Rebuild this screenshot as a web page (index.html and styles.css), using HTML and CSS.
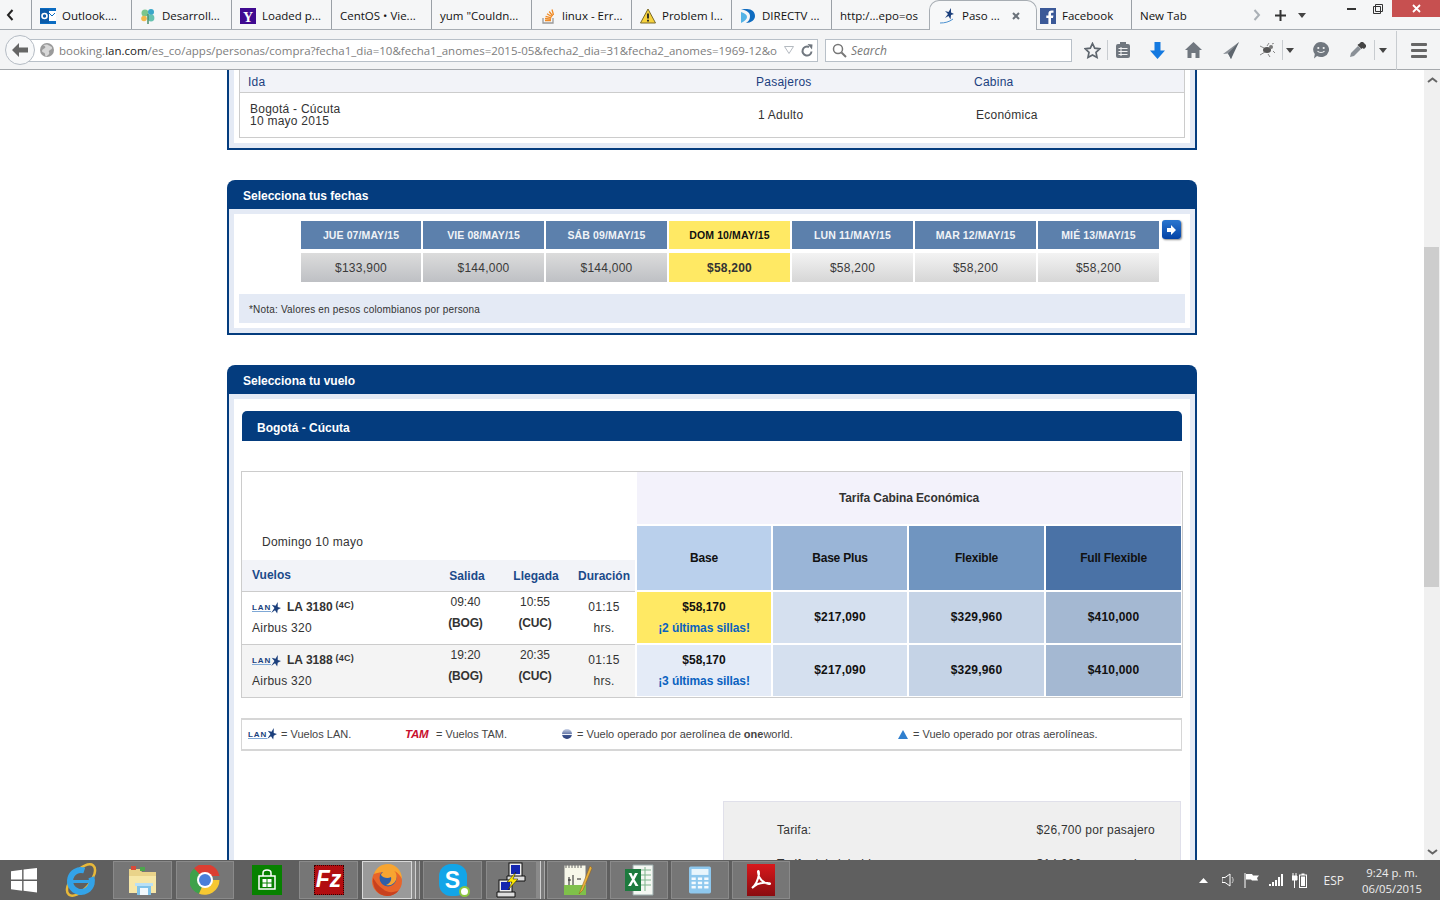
FILE: index.html
```html
<!DOCTYPE html>
<html lang="es">
<head>
<meta charset="utf-8">
<title>Paso 1</title>
<link rel="stylesheet" href="styles.css">
</head>
<body>
<header class="chrome">
  <div class="tabbar">
    <div class="tab-back"><svg width="8" height="12" viewBox="0 0 8 12"><path d="M6.500 1 2 6l4.500 5" fill="none" stroke="#222" stroke-width="2"/></svg></div>
    <div class="tab"><svg class="fav" viewBox="0 0 16 16"><rect width="16" height="16" fill="#0b6cc2"/><rect x="8" y="3" width="8" height="10" fill="#fff"/><path d="M9 5l3 3 3-3" fill="none" stroke="#0b6cc2"/><rect y="1" width="9" height="14" fill="#0a5aa8"/><circle cx="4.500" cy="8" r="2.500" fill="none" stroke="#fff" stroke-width="1.600"/></svg><span>Outlook....</span></div>
    <div class="tab"><svg class="fav" viewBox="0 0 16 16"><circle cx="5" cy="5" r="3.500" fill="#7cc68d"/><circle cx="11" cy="4" r="3" fill="#3aa6c9"/><circle cx="4" cy="10.500" r="2.800" fill="#f2b84b"/><circle cx="11" cy="10" r="3.400" fill="#66c2b0"/><path d="M8 16V6" stroke="#4b8f6a" stroke-width="1.500"/></svg><span>Desarroll...</span></div>
    <div class="tab"><svg class="fav" viewBox="0 0 16 16"><rect width="16" height="16" fill="#400a90"/><text x="8" y="13.500" text-anchor="middle" class="fav-y">Y</text></svg><span>Loaded p...</span></div>
    <div class="tab"><span>CentOS • Vie...</span></div>
    <div class="tab"><span>yum "Couldn...</span></div>
    <div class="tab"><svg class="fav" viewBox="0 0 16 16"><path d="M3 10v5h10v-5" fill="none" stroke="#999" stroke-width="1.300"/><path d="M5 12.500h6M5 10.500l6 .6M5.600 8.300l5.800 1.500M7 5.800l5 3M9.200 3.500l3.500 4.500M12 1.500l1.500 5.500" stroke="#f08a24" stroke-width="1.300" fill="none"/></svg><span>linux - Err...</span></div>
    <div class="tab"><svg class="fav" viewBox="0 0 16 16"><path d="M8 1 15.500 15H.5z" fill="#f7d23c" stroke="#7a6a2a"/><path d="M8 5.500v5M8 11.800v1.700" stroke="#222" stroke-width="1.800"/></svg><span>Problem I...</span></div>
    <div class="tab"><svg class="fav" viewBox="0 0 16 16"><path d="M1 1h6c5 0 8 3 8 7s-4 7-9 7c3-2 4-4 4-7S8 3 1 1z" fill="#0f6cc0"/><path d="M1 4c4 1 6 3 6 5s-2 4-6 6z" fill="#53b3e6"/></svg><span>DIRECTV ...</span></div>
    <div class="tab"><span>http:/...epo=os</span></div>
    <div class="tab tab-active"><svg class="fav" viewBox="0 0 16 16"><path d="M11 0 8.500 4 5 3l3 3-3 4 3.500-2 2 3.500L11 7l3-1-3-1.500z" fill="#1b3f7c"/><path d="M0 15c5 0 9-1 13-4" fill="none" stroke="#4a90d0"/></svg><span class="tab-label">Paso ...</span><svg class="tab-x" width="8" height="8" viewBox="0 0 8 8"><path d="M1 1l6 6M7 1 1 7" stroke="#6b727a" stroke-width="2"/></svg></div>
    <div class="tab tab-fb"><svg class="fav" viewBox="0 0 16 16"><rect width="16" height="16" fill="#3b5998"/><path d="M11 16v-6h2l.4-2.500H11V6c0-.8.3-1.300 1.300-1.300h1.200V2.500C13 2.400 12.300 2.400 11.600 2.400 9.700 2.400 8.400 3.500 8.400 5.600v1.900H6.300V10h2.100v6z" fill="#fff"/></svg><span>Facebook</span></div>
    <div class="tab tab-last"><span>New Tab</span></div>
    <div class="tab-tools">
      <svg class="tool-chev" width="8" height="12" viewBox="0 0 8 12"><path d="M1.500 1 6 6l-4.500 5" fill="none" stroke="#aab0b6" stroke-width="2"/></svg>
      <svg class="tool-plus" width="11" height="11" viewBox="0 0 11 11"><path d="M5.500 0v11M0 5.500h11" stroke="#333" stroke-width="2"/></svg>
      <svg class="tool-drop" width="8" height="5" viewBox="0 0 8 5"><path d="M0 0h8L4 5z" fill="#444"/></svg>
    </div>
    <div class="winctl">
      <span class="win-min"></span>
      <svg class="win-max" width="10" height="10" viewBox="0 0 10 10"><path d="M2.500.5h7v7h-7zM.5 2.500h7v7h-7z" fill="#f5f6f7" stroke="#333"/></svg>
      <div class="win-close"><svg width="9" height="9" viewBox="0 0 9 9"><path d="M1 1l7 7M8 1 1 8" stroke="#fff" stroke-width="1.800"/></svg></div>
    </div>
  </div>
  <div class="toolbar">
    <div class="back"><svg width="18" height="16" viewBox="0 0 18 16"><path d="M8 1 1 8l7 7V10.500h9v-5H8z" fill="#666"/></svg></div>
    <div class="urlbar">
      <svg class="globe" width="14" height="14" viewBox="0 0 14 14"><circle cx="7" cy="7" r="7" fill="#9a9a9a"/><path d="M3 2c2 1 3 2 2 3S2 6 2 8s3 1 3 3 1 3 2 2 3-2 2-4 3-2 3-4-3-2-4-3-3 0-5 0z" fill="#d8d8d8"/></svg>
      <span class="url"><span class="url-dim">booking.</span><span class="url-host">lan.com</span><span class="url-dim">/es_co/apps/personas/compra?fecha1_dia=10&amp;fecha1_anomes=2015-05&amp;fecha2_dia=31&amp;fecha2_anomes=1969-12&amp;o</span></span>
      <svg class="url-drop" width="10" height="8" viewBox="0 0 10 8"><path d="M.5.500h9L5 7.500z" fill="none" stroke="#b4bac0"/></svg>
      <svg class="url-reload" width="12" height="13" viewBox="0 0 12 13"><path d="M10.500 7.500A4.500 4.500 0 1 1 8 3" fill="none" stroke="#70777f" stroke-width="2"/><path d="M6.500 0 11.500 0.500 11 5.500z" fill="#70777f"/></svg>
    </div>
    <div class="searchbar">
      <svg width="15" height="15" viewBox="0 0 15 15"><circle cx="6" cy="6" r="4.500" fill="none" stroke="#777" stroke-width="1.500"/><path d="M9.500 9.500 14 14" stroke="#777" stroke-width="2"/></svg>
      <span>Search</span>
    </div>
    <div class="tools">
      <svg class="t-star" width="17" height="17" viewBox="0 0 17 17"><path d="M8.500 1.500l2.200 4.700 5 .6-3.700 3.500 1 5.100-4.500-2.500L4 15.400l1-5.100L1.300 6.800l5-.6z" fill="none" stroke="#5e666e" stroke-width="1.700"/></svg>
      <span class="t-sep t-sep1"></span>
      <svg class="t-clip" width="14" height="16" viewBox="0 0 14 16"><rect y="2" width="14" height="14" rx="2" fill="#70777f"/><rect x="4" width="6" height="4" fill="#70777f"/><path d="M2.500 6.500h9M2.500 9.500h9M2.500 12.500h9M5 5v9" stroke="#f2f3f4"/></svg>
      <svg class="t-down" width="15" height="17" viewBox="0 0 15 17"><path d="M4.500 0h6v8.500H15L7.500 17 0 8.500h4.500z" fill="#1479e0"/></svg>
      <svg class="t-home" width="17" height="16" viewBox="0 0 17 16"><path d="M8.500 0 17 8h-2.500v8h-4v-5h-4v5h-4V8H0z" fill="#70777f"/></svg>
      <svg class="t-plane" width="16" height="17" viewBox="0 0 16 17"><path d="M16 0 0 12l5-.5L8 17l2-6z" fill="#8a9097"/><path d="M16 0 5 11.500 8 17z" fill="#5e666e"/></svg>
      <svg class="t-bug" width="16" height="14" viewBox="0 0 16 14"><ellipse cx="8" cy="7" rx="4" ry="3" fill="#555"/><circle cx="12" cy="4" r="2" fill="#777"/><path d="M1 3l4 2M1 12l5-3M9 11l2 3M14 8l2 2M8 3l2-3M13 1l2-1" stroke="#888"/></svg>
      <span class="t-sep t-sep2"></span>
      <svg class="t-dd1" width="8" height="5" viewBox="0 0 8 5"><path d="M0 0h8L4 5z" fill="#444"/></svg>
      <svg class="t-smile" width="16" height="17" viewBox="0 0 16 17"><path d="M8 0a8 7.500 0 1 1-4 14l-3 2.500.8-4.500A8 7.500 0 0 1 8 0z" fill="#70777f"/><circle cx="5.300" cy="6" r="1.100" fill="#f2f3f4"/><circle cx="10.700" cy="6" r="1.100" fill="#f2f3f4"/><path d="M4.500 9c1.500 2 5.500 2 7 0" fill="none" stroke="#f2f3f4" stroke-width="1.200"/></svg>
      <svg class="t-drop" width="17" height="16" viewBox="0 0 17 16"><path d="M1 15l1-4 7-7 3 3-7 7z" fill="#8a9097"/><path d="M10 2l2-2h2l3 3v2l-2 2-1.500-1-1 1-4-4 1-1z" fill="#444"/></svg>
      <span class="t-sep t-sep3"></span>
      <svg class="t-dd2" width="8" height="5" viewBox="0 0 8 5"><path d="M0 0h8L4 5z" fill="#444"/></svg>
      <span class="t-sep t-sep4"></span>
      <div class="t-menu"><span></span><span></span><span></span></div>
    </div>
  </div>
</header>

<div class="viewport">
  <main class="page">
    <section class="panel panel-cut">
      <div class="frame">
        <div class="inner inner-summary">
          <div class="summary">
            <div class="sum-head"><span class="sc-a">Ida</span><span class="sc-b">Pasajeros</span><span>Cabina</span></div>
            <div class="sum-row"><div class="sc-a2">Bogotá - Cúcuta<br>10 mayo 2015</div><div class="sc-b2">1 Adulto</div><div>Económica</div></div>
          </div>
        </div>
      </div>
    </section>

    <section class="panel panel-dates">
      <h2 class="panel-head">Selecciona tus fechas</h2>
      <div class="frame">
        <div class="inner inner-dates">
          <div class="dates-wrap">
            <div class="dates">
              <div class="d-h">JUE 07/MAY/15</div><div class="d-h">VIE 08/MAY/15</div><div class="d-h">SÁB 09/MAY/15</div><div class="d-h d-sel">DOM 10/MAY/15</div><div class="d-h">LUN 11/MAY/15</div><div class="d-h">MAR 12/MAY/15</div><div class="d-h">MIÉ 13/MAY/15</div>
              <div class="d-p d-dark">$133,900</div><div class="d-p d-dark">$144,000</div><div class="d-p d-dark">$144,000</div><div class="d-p d-sel d-selp">$58,200</div><div class="d-p">$58,200</div><div class="d-p">$58,200</div><div class="d-p">$58,200</div>
            </div>
            <div class="next"><svg width="9" height="10" viewBox="0 0 9 10"><path d="M0 3h4V0l5 5-5 5V7H0z" fill="#fff"/></svg></div>
          </div>
          <p class="note">*Nota: Valores en pesos colombianos por persona</p>
        </div>
      </div>
    </section>

    <section class="panel panel-flights">
      <h2 class="panel-head">Selecciona tu vuelo</h2>
      <div class="frame frame-open">
        <div class="inner inner-flights">
          <h3 class="route">Bogotá - Cúcuta</h3>
          <div class="fare-table">
            <div class="left">
              <div class="day">Domingo 10 mayo</div>
              <div class="lrow lhead"><span class="l-v">Vuelos</span><span>Salida</span><span>Llegada</span><span class="l-d">Duración</span></div>
              <div class="lrow lflight">
                <div class="fl"><div class="fl-name"><span class="lan"><span class="lan-t">LAN</span><svg class="lan-s" width="12" height="12" viewBox="0 0 11 11"><path d="M8 0 6 3.500 2.500 2.500 5 5.500 2 10l3.500-2.500 2 3L8 7l3-1.500L8 4.500z" fill="#1b3f7c"/></svg></span><b>LA 3180</b><sup>(4C)</sup></div><div>Airbus 320</div></div>
                <div class="tm tm-s">09:40<br><b>(BOG)</b></div>
                <div class="tm tm-l">10:55<br><b>(CUC)</b></div>
                <div class="dur">01:15<br>hrs.</div>
              </div>
              <div class="lrow lflight lalt">
                <div class="fl"><div class="fl-name"><span class="lan"><span class="lan-t">LAN</span><svg class="lan-s" width="12" height="12" viewBox="0 0 11 11"><path d="M8 0 6 3.500 2.500 2.500 5 5.500 2 10l3.500-2.500 2 3L8 7l3-1.500L8 4.500z" fill="#1b3f7c"/></svg></span><b>LA 3188</b><sup>(4C)</sup></div><div>Airbus 320</div></div>
                <div class="tm tm-s">19:20<br><b>(BOG)</b></div>
                <div class="tm tm-l">20:35<br><b>(CUC)</b></div>
                <div class="dur">01:15<br>hrs.</div>
              </div>
            </div>
            <div class="cell cabin">Tarifa Cabina Económica</div>
            <div class="cell c-h c-h1">Base</div><div class="cell c-h c-h2">Base Plus</div><div class="cell c-h c-h3">Flexible</div><div class="cell c-h c-h4">Full Flexible</div>
            <div class="cell c-sel"><b>$58,170</b><a>¡2 últimas sillas!</a></div><div class="cell c-p c-2">$217,090</div><div class="cell c-p c-3">$329,960</div><div class="cell c-p c-4">$410,000</div>
            <div class="cell c-1"><b>$58,170</b><a>¡3 últimas sillas!</a></div><div class="cell c-p c-2">$217,090</div><div class="cell c-p c-3">$329,960</div><div class="cell c-p c-4">$410,000</div>
          </div>

          <div class="legend">
            <div class="lg"><span class="lan lan-lg"><span class="lan-t">LAN</span><svg class="lan-s" width="12" height="12" viewBox="0 0 11 11"><path d="M8 0 6 3.500 2.500 2.500 5 5.500 2 10l3.500-2.500 2 3L8 7l3-1.500L8 4.500z" fill="#1b3f7c"/></svg></span>= Vuelos LAN.</div>
            <div class="lg"><span class="tam">TAM</span>= Vuelos TAM.</div>
            <div class="lg"><svg class="lg-ic" width="10" height="10" viewBox="0 0 10 10"><defs><linearGradient id="gl" x1="0" y1="0" x2="0" y2="1"><stop offset="0" stop-color="#c9d2e6"/><stop offset=".45" stop-color="#6f80ad"/><stop offset=".55" stop-color="#eef1f7"/><stop offset=".6" stop-color="#3f5590"/><stop offset="1" stop-color="#2c3f78"/></linearGradient></defs><circle cx="5" cy="5" r="5" fill="url(#gl)"/></svg><span>= Vuelo operado por aerolínea de <b>one</b>world.</span></div>
            <div class="lg"><svg class="lg-ic" width="10" height="9" viewBox="0 0 10 9"><path d="M5 0l5 9H0z" fill="#2f7fce"/></svg><span>= Vuelo operado por otras aerolíneas.</span></div>
          </div>

          <div class="farebox">
            <div class="fb-row"><span>Tarifa:</span><span class="fb-val">$26,700 por pasajero</span></div>
            <div class="fb-row"><span>Tarifa del viaje ida:</span><span class="fb-val">$14,000 por pasajero</span></div>
          </div>
        </div>
      </div>
    </section>
  </main>
  <aside class="scroll">
    <svg width="11" height="6" viewBox="0 0 11 6"><path d="M1 5l4.500-3.500L10 5" fill="none" stroke="#666" stroke-width="2"/></svg>
    <div class="thumb"></div>
    <svg class="scroll-down" width="11" height="6" viewBox="0 0 11 6"><path d="M1 1l4.500 3.500L10 1" fill="none" stroke="#666" stroke-width="2"/></svg>
  </aside>
</div>

<footer class="taskbar">
  <div class="tb-plain tb-win"><svg width="28" height="26" viewBox="0 0 28 28"><path d="M0 4.500 12 3v10.500H0zM13.500 2.800 28 1v12.500H13.500zM0 15h12v10.500L0 24zM13.500 15H28v12.500l-14.500-2z" fill="#fff"/></svg></div>
  <div class="tb-plain tb-ie"><svg width="34" height="36" viewBox="0 0 34 36"><ellipse cx="17" cy="18" rx="9" ry="19" transform="rotate(40 17 18)" fill="none" stroke="#e8b93a" stroke-width="2.500"/><circle cx="17" cy="19" r="11" fill="none" stroke="#33a3e8" stroke-width="6" stroke-dasharray="52 10" transform="rotate(15 17 19)"/><path d="M8 18h18v3H8z" fill="#33a3e8"/></svg></div>
  <div class="tb"><svg width="30" height="30" viewBox="0 0 30 30"><path d="M1 4h11l2 3h14v21H1z" fill="#e9d38a"/><rect x="3" y="1" width="5" height="4" fill="#d84a3a"/><rect x="12" y="2" width="5" height="4" fill="#4ca64c"/><path d="M1 11h27v17H1z" fill="#f6e7a8"/><path d="M9 19h14v11H9z" fill="#7fc3ea"/><path d="M7 18h18v3H7z" fill="#b9e0f5"/><path d="M12 23h8v7h-8z" fill="#f1f8fc"/></svg></div>
  <div class="tb tb-2"><svg width="30" height="30" viewBox="0 0 30 30"><path d="M15 15 4 3.500A15 15 0 0 1 29.500 11H15z" fill="#dc3e32"/><path d="M15 15 4 3.500A15 15 0 0 0 9 28.800z" fill="#3fa14a"/><path d="M15 15h14.500A15 15 0 0 1 9 28.800z" fill="#f6c832"/><circle cx="15" cy="15" r="8" fill="#fff"/><circle cx="15" cy="15" r="6" fill="#4a7fd8"/></svg></div>
  <div class="tb-plain tb-store"><svg width="30" height="30" viewBox="0 0 30 30"><rect width="30" height="30" fill="#078100"/><path d="M7 11h16v13H7z" fill="none" stroke="#fff" stroke-width="1.500"/><path d="M11 11V8c0-4 8-4 8 0v3" fill="none" stroke="#fff" stroke-width="1.500"/><path d="M10.500 14h4v3.500h-4zM15.500 14h4v3.500h-4zM10.500 18.500h4V22h-4zM15.500 18.500h4V22h-4z" fill="#fff"/></svg></div>
  <div class="tb tb-fz"><div class="fz">Fz</div></div>
  <div class="tb tb-2 tb-active"><svg width="32" height="34" viewBox="0 0 32 34"><circle cx="16" cy="18" r="15" fill="#e8642a"/><circle cx="17" cy="15" r="8.500" fill="#2f5fa8"/><path d="M3 11C5 5 10 1 17 1c8 0 14 7 14 15-2-4-5-7-8-8 3 2 3 6 2 9-2 4-5 6-10 5 3-1 6-4 5-8-3 2-8 1-10-2 0-1 1-2 2-3-3 0-6 1-9 2z" fill="#f7a531"/><path d="M2 15c-1 9 5 18 14 18 5 0 9-2 12-6-5 3-12 3-16-1-5-3-7-7-10-11z" fill="#c8411f"/></svg></div>
  <span class="stack"></span><span class="stack stack-b"></span>
  <div class="tb tb-sk"><div class="skype"><span>S</span><i></i></div></div>
  <div class="tb tb-2 tb-net"><svg width="32" height="36" viewBox="0 0 32 36"><rect x="13" y="1" width="13" height="15" fill="#eee" stroke="#111"/><rect x="15" y="3" width="9" height="9" fill="#1426b0"/><path d="M11 14h18v5H11z" fill="#ddd" stroke="#111"/><rect x="3" y="18" width="13" height="13" fill="#eee" stroke="#111"/><rect x="5" y="20" width="9" height="8" fill="#1426b0"/><path d="M1 30h18v5H1z" fill="#ddd" stroke="#111"/><path d="M20 10 11 20h5l-4 8 10-11h-5z" fill="#ffe900" stroke="#111" stroke-width=".5"/></svg></div>
  <span class="stack"></span><span class="stack stack-b"></span>
  <div class="tb tb-1"><svg width="32" height="34" viewBox="0 0 32 34"><rect x="3" y="2" width="22" height="30" fill="#f7f7e9" stroke="#777"/><path d="M3 22h22v10H3z" fill="#7fc04a"/><path d="M5 2v3M8 2v3M11 2v3M14 2v3M17 2v3M20 2v3" stroke="#666"/><path d="M8 14v8M12 12v10M7 17h3M16 16h4" stroke="#222"/><path d="M29 3 20 26l-2 5 4-4 9-22z" fill="#e9b23a" stroke="#8a5a20" stroke-width=".5"/></svg></div>
  <div class="tb tb-3"><svg width="30" height="32" viewBox="0 0 30 32"><path d="M9 1h20v30H9z" fill="#f4f7f2" stroke="#9aa"/><path d="M15 6h12M15 11h12M15 16h12M15 21h12M21 3v24" stroke="#7fb58c"/><path d="M1 5h16v22H1z" fill="#1d7a3e"/><path d="M4.500 9 8 15.500 4 22h3l2.200-4.200L11.500 22h3l-4-6.500L14 9h-3l-2 3.800L7.500 9z" fill="#fff"/></svg></div>
  <div class="tb tb-3"><svg width="22" height="30" viewBox="0 0 26 32"><rect width="26" height="32" rx="2" fill="#8ec8ee"/><rect x="3" y="3" width="20" height="7" fill="#e8f5fc"/><g fill="#f4fafe"><rect x="3" y="13" width="5" height="3"/><rect x="10.500" y="13" width="5" height="3"/><rect x="18" y="13" width="5" height="3"/><rect x="3" y="18" width="5" height="3"/><rect x="10.500" y="18" width="5" height="3"/><rect x="18" y="18" width="5" height="3"/><rect x="3" y="23" width="5" height="3"/><rect x="10.500" y="23" width="5" height="3"/><rect x="18" y="23" width="5" height="3"/></g></svg></div>
  <div class="tb tb-3"><svg width="28" height="32" viewBox="0 0 28 32"><defs><linearGradient id="ac" x1="0" y1="0" x2="0" y2="1"><stop offset="0" stop-color="#d8181c"/><stop offset="1" stop-color="#8a0c10"/></linearGradient></defs><rect width="28" height="32" fill="url(#ac)"/><path d="M5 24c4-3 6-8 7-14 0-3-1-4-1-2 0 5 4 11 11 12 2 0 1-1-1-1-6-1-12 1-16 5z" fill="none" stroke="#fff" stroke-width="2"/></svg></div>
  <div class="tray">
    <svg class="tr-caret" width="9" height="5" viewBox="0 0 9 5"><path d="M0 5h9L4.500 0z" fill="#fff"/></svg>
    <svg class="tr-vol" width="13" height="14" viewBox="0 0 13 14"><path d="M0 4.500h3L8 1v12L3 9.500H0z" fill="none" stroke="#fff"/><path d="M10 4c1.500 2 1.500 4 0 6" fill="none" stroke="#ccc"/></svg>
    <svg class="tr-flag" width="15" height="15" viewBox="0 0 15 15"><path d="M1 0v15" stroke="#fff"/><path d="M2 1h6l1 1.500h6l-2 2.500 1 2.500H8L7 6.500H2z" fill="#fff"/></svg>
    <svg class="tr-sig" width="15" height="12" viewBox="0 0 15 12"><path d="M0 10h2v2H0zM3 8h2v4H3zM6 6h2v6H6zM9 3h2v9H9zM12 0h2v12h-2z" fill="#fff"/></svg>
    <svg class="tr-bat" width="15" height="15" viewBox="0 0 15 15"><path d="M1 0v3M4 0v3M0 3h5v4H0zM2.500 7v8" stroke="#fff" fill="#fff"/><rect x="7.500" y="2" width="7" height="12.500" fill="none" stroke="#fff"/><rect x="9.500" y=".5" width="3" height="1.500" fill="#fff"/><rect x="9" y="3.500" width="4" height="9.500" fill="#fff"/></svg>
    <span class="tr-lang">ESP</span>
    <div class="tr-clock"><span>9:24 p. m.</span><span>06/05/2015</span></div>
  </div>
</footer>
</body>
</html>
```
FILE: styles.css
```css
* { box-sizing: border-box; }
html, body { margin: 0; padding: 0; height: 900px; overflow: hidden; }
body { width: 1440px; display: flex; flex-direction: column; font-family: "Liberation Sans", Arial, sans-serif; font-size: 12px; letter-spacing: .25px; color: #333; background: #fff; }
b { letter-spacing: 0; }

/* browser chrome */
.chrome { height: 70px; flex: none; font-family: "Open Sans", "Noto Sans", sans-serif; color: #111; letter-spacing: 0; }
.tabbar { height: 30px; display: flex; background: #f5f6f7; border-bottom: 1px solid #a7adb3; }
.tab-back { width: 31px; height: 29px; display: flex; align-items: center; padding-left: 6px; }
.tab { width: 100px; height: 29px; padding: 2px 0 0 8px; display: flex; align-items: center; gap: 6px; border-left: 1px solid #9aa0a6; font-size: 11.500px; white-space: nowrap; overflow: hidden; }
.tab-active { width: 108px; margin: 0 -2px 0 -2px; height: 30px; padding: 0 0 0 10px; border: 1px solid #a7adb3; border-bottom: 0; border-radius: 10px 10px 0 0; background: #f7f8f9; position: relative; z-index: 1; overflow: visible; }
.tab-active .tab-label { width: 44px; }
.tab-fb { border-left: 0; margin-left: -6px; padding-left: 11px; width: 102px; }
.fav { width: 16px; height: 16px; flex: none; }
.fav-y { font: bold 14px "Liberation Serif", serif; fill: #fff; }
.tab-tools { display: flex; align-items: center; height: 29px; padding-top: 1px; }
.tool-chev { margin-left: 22px; }
.tool-plus { margin-left: 14px; }
.tool-drop { margin-left: 12px; }
.winctl { margin-left: auto; display: flex; align-items: flex-start; }
.win-min { width: 9px; height: 2px; background: #333; margin: 8px 17px 0 0; }
.win-max { margin: 4px 9px 0 0; }
.win-close { width: 48px; height: 17px; background: #c75050; display: flex; align-items: center; justify-content: center; }

.toolbar { height: 40px; display: flex; align-items: center; background: #f3f4f5; border-bottom: 1px solid #a5a9ad; position: relative; padding: 1px 0 0 5px; }
.back { width: 30px; height: 30px; border-radius: 50%; border: 1px solid #b5bcc4; background: #f7f8f9; display: flex; align-items: center; justify-content: center; position: relative; z-index: 1; flex: none; }
.urlbar { width: 797px; height: 23px; margin-left: -14px; padding-left: 18px; background: #fff; border: 1px solid #b8c0c8; display: flex; align-items: center; flex: none; }
.globe { flex: none; }
.url { margin-left: 5px; width: 718px; flex: none; overflow: hidden; white-space: nowrap; font-size: 11.500px; }
.url-dim { color: #7d7d7d; }
.url-host { color: #222; }
.url-drop { margin-left: 7px; flex: none; }
.url-reload { margin-left: 7px; flex: none; }
.searchbar { width: 247px; height: 23px; margin-left: 7px; padding-left: 6px; background: #fff; border: 1px solid #b8c0c8; display: flex; align-items: center; gap: 4px; font-style: italic; font-size: 12px; color: #777; flex: none; }
.tools { display: flex; align-items: center; height: 39px; flex: none; }
.t-star { margin-left: 12px; }
.t-sep { width: 1px; height: 20px; background: #c8ccd0; }
.t-sep1 { margin-left: 6px; }
.t-clip { margin-left: 8px; }
.t-down { margin-left: 20px; }
.t-home { margin-left: 20px; }
.t-plane { margin-left: 21px; }
.t-bug { margin-left: 20px; }
.t-sep2 { margin-left: 7px; }
.t-dd1 { margin-left: 3px; }
.t-smile { margin-left: 19px; }
.t-drop { margin-left: 20px; }
.t-sep3 { margin-left: 8px; }
.t-dd2 { margin-left: 4px; }
.t-sep4 { margin-left: 9px; height: 39px; }
.t-menu { margin-left: 14px; display: flex; flex-direction: column; gap: 3px; }
.t-menu span { display: block; width: 16px; height: 3px; background: #666; border-radius: 1px; }

/* viewport */
.viewport { height: 790px; flex: none; display: flex; overflow: hidden; }
.page { width: 1424px; flex: none; height: 790px; overflow: hidden; }
.scroll { width: 16px; flex: none; height: 790px; background: #f0f0f0; display: flex; flex-direction: column; align-items: center; padding-top: 7px; }
.thumb { width: 15px; height: 340px; margin: 164px 1px 0 0; background: #cdcdcd; }
.scroll-down { margin-top: auto; margin-bottom: 5px; }

.panel { width: 970px; margin: 0 auto; }
.panel-head { height: 29px; margin: 0; padding: 0 16px; background: #043c7e; border-radius: 8px 8px 0 0; color: #fff; font-size: 12px; font-weight: bold; line-height: 33px; letter-spacing: 0; }
.frame { border: 2px solid #043c7e; border-top: 0; background: #e4eaf5; padding: 5px; }
.frame-open { border-bottom: 0; padding-bottom: 0; }
.inner { background: #fff; padding: 0 5px; }
.panel-cut .frame { padding-top: 0; height: 80px; }
.inner-summary { height: 73px; }
.summary { border: 1px solid #ccc; border-top: 0; height: 68px; color: #333; }
.sum-head { height: 23px; background: #f2f3f8; border-bottom: 1px solid #ccc; display: flex; align-items: center; padding: 1px 0 0 8px; color: #1c3f7e; }
.sc-a { width: 508px; }
.sc-b { width: 218px; }
.sum-row { display: flex; align-items: center; height: 44px; padding: 0 0 1px 10px; line-height: 12px; }
.sc-a2 { width: 508px; }
.sc-b2 { width: 218px; }

.panel-dates { margin-top: 30px; }
.inner-dates { padding: 7px 5px 5px; }
.dates-wrap { display: flex; gap: 3px; margin-left: 62px; }
.dates { display: grid; grid-template-columns: 120px repeat(6, 121px); grid-template-rows: 28px 29px; column-gap: 2px; row-gap: 4px; }
.d-h { background: #5c80ac; color: #f0f3f7; font-size: 10.500px; letter-spacing: .1px; font-weight: bold; display: flex; align-items: center; justify-content: center; }
.d-p { background: linear-gradient(#f3f3f3, #d6d6d6); font-size: 12px; display: flex; align-items: center; justify-content: center; color: #3a3a3a; }
.d-dark { background: linear-gradient(#dcdcdc, #bec0c4); }
.d-h.d-sel, .d-p.d-sel { background: #ffe964; color: #111; }
.d-p.d-selp { font-weight: bold; color: #333; letter-spacing: .2px; }
.next { width: 19px; height: 19px; margin-top: -1px; background: linear-gradient(#2a76cf, #0443a6); border-radius: 3px; display: flex; align-items: center; justify-content: center; box-shadow: 1px 1px 2px #888; }
.note { margin: 12px 0 0; height: 29px; background: #e4eaf5; padding: 2px 0 0 10px; display: flex; align-items: center; font-size: 10px; letter-spacing: .19px; color: #333; }

.panel-flights { margin-top: 30px; }
.inner-flights { padding: 12px 5px 0; height: 461px; overflow: hidden; }
.route { height: 30px; margin: 0 3px; padding-left: 15px; background: #043c7e; border-radius: 5px 5px 0 0; color: #fff; font-size: 12px; font-weight: bold; line-height: 35px; letter-spacing: 0; }

.fare-table { margin: 30px 2px 0 2px; width: 942px; border: 1px solid #ccc; padding: 0 1px 1px 0; display: grid; grid-template-columns: 393px 134px 134px 135px 135px; grid-template-rows: 52px 64px 51px 51px; gap: 2px; }
.left { grid-column: 1; grid-row: 1 / 5; margin-bottom: -1px; display: flex; flex-direction: column; }
.day { height: 88px; padding: 63px 0 0 20px; line-height: 14px; }
.lrow { display: grid; grid-template-columns: 190px 70px 68px 65px; }
.lhead { height: 32px; background: #f2f3f8; border-bottom: 1px solid #ccc; color: #1c4a8a; font-weight: bold; align-items: center; text-align: center; letter-spacing: 0; }
.l-v { text-align: left; padding-left: 10px; margin-top: -2px; }
.l-d { padding-left: 3px; white-space: nowrap; }
.lflight { height: 53px; border-bottom: 1px solid #ccc; line-height: 21px; }
.lalt { height: 52px; border-bottom: 0; background: #f4f4f4; }
.fl { padding: 5px 0 0 10px; }
.fl-name { display: flex; align-items: center; height: 21px; white-space: pre; }
.fl-name sup { font-size: 9px; font-weight: bold; letter-spacing: .2px; line-height: 9px; margin: -5px 0 0 3px; }
.fl-name b { color: #333; }
.lan { display: inline-flex; align-items: center; width: 35px; flex: none; }
.lan-t { font-size: 8px; font-weight: bold; color: #1b3f7c; letter-spacing: .9px; border-bottom: 1px solid #7fa8d6; line-height: 7px; padding-top: 1px; }
.lan-s { margin-left: -2px; }
.tm { text-align: center; letter-spacing: 0; }
.tm b { letter-spacing: -.2px; }
.tm-s { padding-right: 3px; }
.tm-l { padding-right: 2px; }
.dur { padding: 5px 0 0 3px; text-align: center; }

.cell { display: flex; flex-direction: column; align-items: center; justify-content: center; font-weight: bold; color: #111; letter-spacing: 0; }
.cabin { grid-column: 2 / 6; grid-row: 1; background: #f3f2fb; color: #333; letter-spacing: -.1px; }
.c-h { letter-spacing: -.2px; }
.c-p { letter-spacing: .2px; padding-bottom: 2px; }
.c-h1 { background: #bad0ec; }
.c-h2 { background: #9ab5d7; }
.c-h3 { background: #7095c0; }
.c-h4 { background: #4a72a6; }
.c-sel { background: #ffe964; line-height: 21px; }
.c-1 { background: #e4ebf7; line-height: 21px; }
.c-2 { background: #d5e0ef; }
.c-3 { background: #c5d3e6; }
.c-4 { background: #a4b8d2; }
.cell a { color: #0a62c0; letter-spacing: -.1px; }

.legend { margin: 20px 0 0 2px; width: 941px; height: 33px; border: 1px solid #d6d6d6; border-width: 2px 1px 2px 1px; padding: 0 0 1px 6px; display: grid; grid-template-columns: 157px 157px 336px 1fr; align-items: center; font-size: 11px; letter-spacing: 0; color: #444; }
.lg { display: flex; align-items: center; }
.lan-lg { width: 33px; }
.tam { width: 31px; font-style: italic; font-weight: bold; font-size: 11.500px; color: #c8102e; letter-spacing: -.2px; }
.lg-ic { margin-right: 5px; flex: none; }

.farebox { margin: 50px 0 0 484px; width: 458px; height: 90px; background: #efefef; border: 1px solid #e0e0ea; padding: 21px 25px 0 53px; }
.fb-row { display: flex; height: 34px; }
.fb-row span:first-child { width: 262px; }
.fb-val { white-space: nowrap; }

/* taskbar */
.taskbar { height: 40px; flex: none; background: #5f5f5f; display: flex; align-items: flex-start; padding-top: 1px; font-family: "Open Sans", "Noto Sans", sans-serif; color: #fff; letter-spacing: 0; }
.tb-plain { height: 38px; display: flex; align-items: center; justify-content: center; flex: none; }
.tb-win { width: 48px; }
.tb-ie { width: 65px; }
.tb-store { width: 65px; }
.tb { width: 59px; height: 38px; flex: none; display: flex; align-items: center; justify-content: center; background: #767676; border: 1px solid #8a8a8a; }
.tb-2 { width: 58px; margin-left: 4px; }
.tb-fz { margin-left: 0; }
.tb-active { width: 50px; background: #9a9a9a; border-color: #d8d8d8; }
.tb-sk { margin-left: 3px; }
.tb-net { width: 51px; }
.tb-1 { width: 60px; margin-left: 2px; }
.tb-3 { width: 58px; margin-left: 3px; }
.stack { width: 4px; height: 38px; background: #8a8a8a; border-right: 1px solid #d0d0d0; flex: none; }
.stack-b { background: #7a7a7a; border-right-color: #aaa; }
.fz { width: 30px; height: 30px; background: #b20d10; border: 1px dotted #300; color: #fff; font: italic bold 23px/27px "Liberation Sans", sans-serif; text-align: center; }
.skype { width: 28px; height: 32px; position: relative; background: #12a5e8; border-radius: 12px; color: #fff; font: bold 23px/32px "Liberation Sans", sans-serif; text-align: center; }
.skype i { position: absolute; right: -3px; bottom: -1px; width: 11px; height: 11px; border-radius: 50%; background: #fff; border: 2px solid #8cc63f; }
.tray { margin-left: auto; display: flex; align-items: center; height: 38px; flex: none; }
.tr-caret { margin-right: 14px; }
.tr-vol { margin-right: 9px; }
.tr-flag { margin-right: 10px; }
.tr-sig { margin-right: 8px; }
.tr-bat { margin-right: 17px; }
.tr-lang { font-size: 12px; margin-right: 9px; color: #eee; }
.tr-clock { width: 78px; margin-right: 9px; display: flex; flex-direction: column; align-items: center; font-size: 11.300px; line-height: 16px; color: #eee; padding-top: 2px; }
```
